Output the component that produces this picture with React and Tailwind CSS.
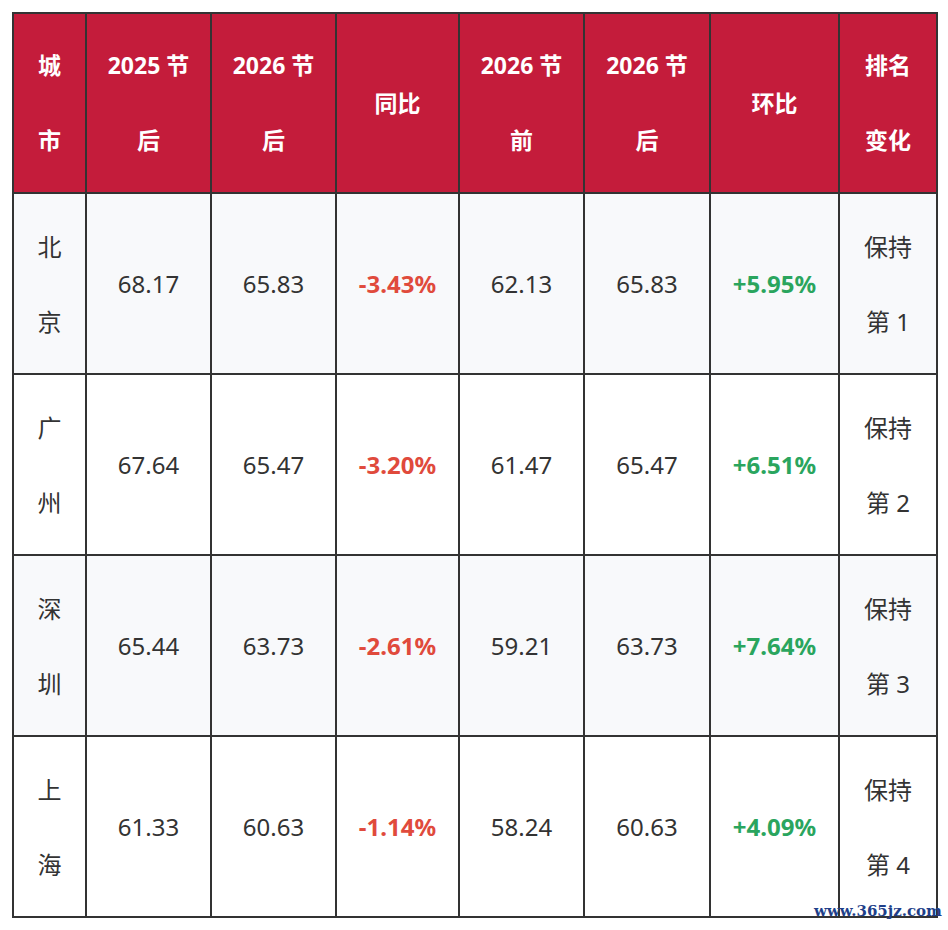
const rows = [
  { city: ['北', '京'], a: '68.17', b: '65.83', yoy: '-3.43%', c: '62.13', d: '65.83', mom: '+5.95%', rank: 1 },
  { city: ['广', '州'], a: '67.64', b: '65.47', yoy: '-3.20%', c: '61.47', d: '65.47', mom: '+6.51%', rank: 2 },
  { city: ['深', '圳'], a: '65.44', b: '63.73', yoy: '-2.61%', c: '59.21', d: '63.73', mom: '+7.64%', rank: 3 },
  { city: ['上', '海'], a: '61.33', b: '60.63', yoy: '-1.14%', c: '58.24', d: '60.63', mom: '+4.09%', rank: 4 },
]

const headers = [
  ['城', '市'],
  ['2025 节', '后'],
  ['2026 节', '后'],
  ['同比'],
  ['2026 节', '前'],
  ['2026 节', '后'],
  ['环比'],
  ['排名', '变化'],
]

const widths = ['w-[73px]', 'w-[125px]', 'w-[125px]', 'w-[123px]', 'w-[125px]', 'w-[126px]', 'w-[129px]', 'w-[98px]']

function Lines({ items }) {
  return items.map((t, i) => (
    <div key={i} className="whitespace-nowrap leading-[75px]">
      {t}
    </div>
  ))
}

export default function App() {
  return (
    <div
      className="relative min-h-[930px] w-[948px] bg-white pl-[12px] pt-[12px] text-[#333]"
      style={{ fontFamily: '"Noto Sans", "Noto Sans CJK SC", sans-serif' }}
    >
      <table className="table-fixed border-collapse border-2 border-[#333] text-center text-[24px]">
        <colgroup>
          {widths.map((w, i) => (
            <col key={i} className={w} />
          ))}
        </colgroup>
        <thead>
          <tr className="h-[180px] bg-[#c41c3b] text-[23px] text-white">
            {headers.map((h, i) => (
              <th key={i} className="border-2 border-[#333] p-0 align-middle font-bold">
                <Lines items={h} />
              </th>
            ))}
          </tr>
        </thead>
        <tbody>
          {rows.map((r, i) => (
            <tr key={r.city[0]} className={i % 2 === 0 ? 'h-[181px] bg-[#f8f9fb]' : 'h-[181px] bg-white'}>
              <td className="border-2 border-[#333] p-0">
                <Lines items={r.city} />
              </td>
              <td className="border-2 border-[#333] p-0">{r.a}</td>
              <td className="border-2 border-[#333] p-0">{r.b}</td>
              <td className="border-2 border-[#333] p-0 font-bold text-[#e04a3c]">{r.yoy}</td>
              <td className="border-2 border-[#333] p-0">{r.c}</td>
              <td className="border-2 border-[#333] p-0">{r.d}</td>
              <td className="border-2 border-[#333] p-0 font-bold text-[#2aa55e]">{r.mom}</td>
              <td className="border-2 border-[#333] p-0">
                <Lines items={['保持', `第 ${r.rank}`]} />
              </td>
            </tr>
          ))}
        </tbody>
      </table>
      <div
        className="absolute right-[6px] top-[904px] text-[15px] font-bold leading-none text-[#1e3f8a]"
        style={{ fontFamily: '"DejaVu Serif", serif' }}
      >
        www.365jz.com
      </div>
    </div>
  )
}
